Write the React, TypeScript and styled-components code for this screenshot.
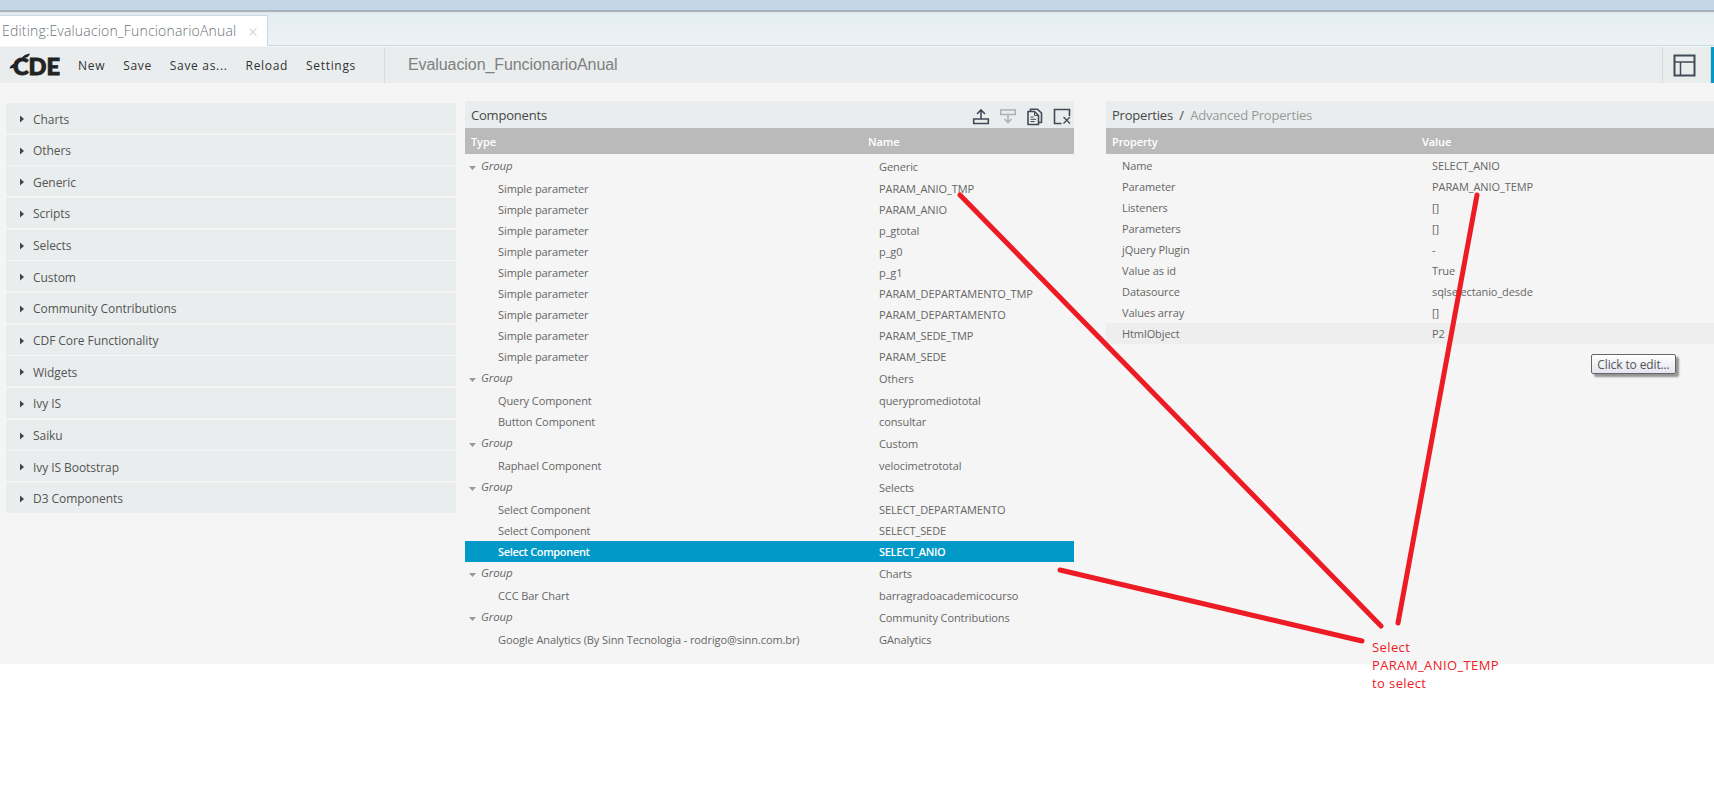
import styled, { createGlobalStyle } from 'styled-components';

const GlobalStyle = createGlobalStyle`
    body {
        margin: 0;
        background-color: #fff;
        font-family: 'Open Sans', 'Noto Sans', sans-serif;
        overflow: hidden;
    }

    * {
        box-sizing: border-box;
    }
`;

const Page = styled.div`
    position: relative;
    width: 1714px;
    height: 790px;
    overflow: hidden;
`;

const WindowBar = styled.div`
    height: 12px;
    background-color: #c4d6e5;
    border-bottom: 2px solid #a9b2ba;
`;

const TabStrip = styled.div`
    display: flex;
    align-items: flex-end;
    height: 35px;
    padding-bottom: 1px;
    background: linear-gradient(#dfe6ea 0, #e5eef1 3px, #edf2f6 33px, #c9d9e6 33px, #c9d9e6 34px, #f4f7f8 34px);
`;

const Tab = styled.div`
    display: flex;
    align-items: center;
    justify-content: space-between;
    width: 268px;
    height: 31px;
    padding: 0 10px 1px 2px;
    background-color: #fff;
    border-top: 1px solid #c9d9e6;
    border-right: 1px solid #c9d9e6;
    color: #6c7379;
    font-size: 14px;
    font-weight: 300;
    letter-spacing: 0.18px;
    white-space: nowrap;

    svg {
        margin-top: 3px;
    }
`;

const HeaderContainer = styled.header`
    display: flex;
    align-items: center;
    height: 36px;
    background-color: #e9eded;
`;

const Brand = styled.div`
    display: flex;
    width: 78px;
    padding-left: 9px;
`;

const Nav = styled.nav`
    display: flex;
    gap: 18px;
    width: 306px;
    padding-top: 1px;
    color: #333;
    font-size: 12px;
    letter-spacing: 0.68px;
    white-space: nowrap;
`;

const DashboardTitle = styled.div`
    display: flex;
    align-items: center;
    flex: 1;
    height: 36px;
    padding: 0 0 1px 23px;
    border-left: 1px solid #d8dadc;
    color: #808080;
    font-family: 'Liberation Sans', Arial, sans-serif;
    font-size: 16px;
    letter-spacing: -0.08px;
`;

const LayoutButton = styled.div`
    display: flex;
    align-items: center;
    width: 49px;
    height: 36px;
    padding-left: 10px;
    border-left: 1px solid #d6dadb;
    border-right: 1px solid #d6dadb;
`;

const ActiveMode = styled.div`
    width: 3px;
    height: 36px;
    background-color: #0099c8;
`;

const Workspace = styled.main`
    display: flex;
    align-items: flex-start;
    height: 581px;
    padding: 18px 0 0 6px;
    background-color: #f5f5f5;
`;

const Palette = styled.div`
    display: flex;
    flex-direction: column;
    gap: 1.67px;
    width: 450px;
    margin: 2px 9px 0 0;
`;

const PaletteItem = styled.div`
    display: flex;
    align-items: center;
    gap: 9px;
    height: 30px;
    padding: 2px 0 0 14px;
    background-color: #e9eded;
    color: #555;
    font-size: 12px;
    letter-spacing: -0.06px;
`;

const Panel = styled.section<{ $width: number }>`
    width: ${props => props.$width}px;
    flex: none;

    & + & {
        margin-left: 32px;
    }
`;

const PanelTitle = styled.div`
    display: flex;
    align-items: center;
    height: 27px;
    padding: 1px 3px 0 6px;
    background-color: #e9eded;
    color: #484848;
    font-size: 13px;
    letter-spacing: -0.2px;
    white-space: pre;
`;

const Muted = styled.span`
    color: #999;
`;

const Actions = styled.div`
    display: flex;
    gap: 9px;
    margin-left: auto;
    padding-top: 3px;
`;

const TableHead = styled.div<{ $split: number }>`
    display: grid;
    grid-template-columns: ${props => props.$split}px 1fr;
    align-items: center;
    height: 26px;
    margin-bottom: 1px;
    padding: 1px 0 0 6px;
    background-color: #bababa;
    color: #fff;
    font-size: 11px;
    font-weight: 600;
    letter-spacing: -0.1px;
`;

const Row = styled.div<{ $split: number; $indent: number; $selected?: boolean; $hovered?: boolean }>`
    display: grid;
    grid-template-columns: ${props => props.$split - props.$indent}px 1fr;
    align-items: center;
    height: 21px;
    padding-left: ${props => props.$indent}px;
    background-color: ${props => props.$selected ? '#0099c8' : props.$hovered ? '#eee' : 'transparent'};
    color: ${props => props.$selected ? '#fff' : '#666'};
    font-size: 11px;
    font-weight: ${props => props.$selected ? 600 : 400};
    letter-spacing: ${props => props.$selected ? -0.33 : -0.09}px;
    white-space: nowrap;
`;

const GroupRow = styled(Row)`
    height: 23px;
`;

const GroupLabel = styled.span`
    display: flex;
    align-items: center;
    gap: 5px;
    padding-bottom: 2px;
    font-size: 11.5px;
    font-style: italic;

    svg {
        margin-top: 4px;
    }
`;

const Tooltip = styled.div`
    position: absolute;
    left: 1591px;
    top: 354px;
    width: 85px;
    height: 20px;
    border: 1px solid #666;
    border-radius: 2px;
    background: linear-gradient(#fff, #e4e5f0);
    box-shadow: 3px 3px 2px rgba(0, 0, 0, 0.4);
    color: #555;
    font-size: 12px;
    letter-spacing: -0.12px;
    line-height: 19px;
    text-align: center;
    white-space: nowrap;
`;

const Annotations = styled.svg`
    position: absolute;
    left: 0;
    top: 0;
`;

const Note = styled.div`
    position: absolute;
    left: 1372px;
    top: 638px;
    color: #ed1c24;
    font-size: 13px;
    letter-spacing: 0.4px;
    line-height: 18px;
    white-space: pre;
`;

const categories = [
    'Charts', 'Others', 'Generic', 'Scripts', 'Selects', 'Custom', 'Community Contributions',
    'CDF Core Functionality', 'Widgets', 'Ivy IS', 'Saiku', 'Ivy IS Bootstrap', 'D3 Components',
];

const groups = [
    {
        name: 'Generic',
        items: [
            ['Simple parameter', 'PARAM_ANIO_TMP'],
            ['Simple parameter', 'PARAM_ANIO'],
            ['Simple parameter', 'p_gtotal'],
            ['Simple parameter', 'p_g0'],
            ['Simple parameter', 'p_g1'],
            ['Simple parameter', 'PARAM_DEPARTAMENTO_TMP'],
            ['Simple parameter', 'PARAM_DEPARTAMENTO'],
            ['Simple parameter', 'PARAM_SEDE_TMP'],
            ['Simple parameter', 'PARAM_SEDE'],
        ],
    },
    {
        name: 'Others',
        items: [
            ['Query Component', 'querypromediototal'],
            ['Button Component', 'consultar'],
        ],
    },
    { name: 'Custom', items: [['Raphael Component', 'velocimetrototal']] },
    {
        name: 'Selects',
        items: [
            ['Select Component', 'SELECT_DEPARTAMENTO'],
            ['Select Component', 'SELECT_SEDE'],
            ['Select Component', 'SELECT_ANIO'],
        ],
    },
    { name: 'Charts', items: [['CCC Bar Chart', 'barragradoacademicocurso']] },
    {
        name: 'Community Contributions',
        items: [['Google Analytics (By Sinn Tecnologia - rodrigo@sinn.com.br)', 'GAnalytics']],
    },
];

const properties = [
    ['Name', 'SELECT_ANIO'],
    ['Parameter', 'PARAM_ANIO_TEMP'],
    ['Listeners', '[]'],
    ['Parameters', '[]'],
    ['jQuery Plugin', '-'],
    ['Value as id', 'True'],
    ['Datasource', 'sqlselectanio_desde'],
    ['Values array', '[]'],
    ['HtmlObject', 'P2'],
];

const selectedName = 'SELECT_ANIO';

const Logo = () => (
    <svg width="54" height="26" viewBox="0 0 54 26" fill="#222">
        <text
            x="4"
            y="22.500"
            fontFamily="Lato, sans-serif"
            fontSize="23.500"
            fontWeight="900"
            stroke="#222"
            strokeWidth="0.900"
            textLength="47"
            lengthAdjust="spacingAndGlyphs"
        >
            CDE
        </text>
        <path d="M0.500 16.500c0.500-2.500 2.500-4 5.500-5l-1 4.500z" />
        <path d="M13 6c1.500-3 4-3.500 8-4.500-1 3.500-4 5-8 4.500z" />
    </svg>
);

const Arrow = () => (
    <svg width="4" height="8" viewBox="0 0 4 8" fill="#444">
        <path d="M0 0.500L4 4 0 7.500z" />
    </svg>
);

const Caret = () => (
    <svg width="7" height="4" viewBox="0 0 7 4" fill="#999">
        <path d="M0 0h7L3.500 4z" />
    </svg>
);

const Header = () => (
    <HeaderContainer>
        <Brand><Logo /></Brand>
        <Nav>
            <span>New</span>
            <span>Save</span>
            <span>Save as...</span>
            <span>Reload</span>
            <span>Settings</span>
        </Nav>
        <DashboardTitle>Evaluacion_FuncionarioAnual</DashboardTitle>
        <LayoutButton>
            <svg width="23" height="23" viewBox="0 0 23 23" fill="none" stroke="#414b57">
                <path d="M1.500 1.500h20v20h-20z" strokeWidth="2" />
                <path d="M2 8h19M7.500 8v13" strokeWidth="1.500" />
            </svg>
        </LayoutButton>
        <ActiveMode />
    </HeaderContainer>
);

const ToolbarIcons = () => (
    <Actions>
        <svg width="18" height="18" viewBox="0 0 18 18" fill="none" stroke="#414b57" strokeWidth="1.600">
            <path d="M9 11H1.700v4.500h14.600V11H9V2.500M5 6l4-4 4 4" />
        </svg>
        <svg width="18" height="18" viewBox="0 0 18 18" fill="none" stroke="#aeb2b5" strokeWidth="1.600">
            <path d="M9 6.500H1.700V2h14.600v4.500H9v8M5.500 11L9 14.500l3.500-3.500" />
        </svg>
        <svg width="18" height="18" viewBox="0 0 18 18" fill="none" stroke="#414b57" strokeWidth="1.600" strokeLinejoin="round">
            <path d="M2 3.500h6.500l4 4v9H2z" />
            <path d="M8.500 3.500v4h4M4.500 9h3M4.500 11.300h5.500M4.500 13.500h4" strokeWidth="1" />
            <path d="M4.500 3V1.300h7L15.500 5v9.500H13" />
        </svg>
        <svg width="18" height="18" viewBox="0 0 18 18" fill="none" stroke="#414b57" strokeWidth="1.600">
            <path d="M8.500 15.500H1.500v-14h15V8" />
            <path d="M10.500 9l6.500 6.500M17 9l-6.500 6.500" strokeWidth="1.300" />
        </svg>
    </Actions>
);

const App = () => {
    return (
        <Page>
            <GlobalStyle />
            <WindowBar />
            <TabStrip>
                <Tab>
                    <span>Editing:Evaluacion_FuncionarioAnual</span>
                    <svg width="8" height="8" viewBox="0 0 8 8" stroke="#d3dde6" strokeWidth="1.300">
                        <path d="M0.500 0.500l7 7M7.500 0.500l-7 7" />
                    </svg>
                </Tab>
            </TabStrip>
            <Header />
            <Workspace>
                <Palette>
                    {categories.map(category => (
                        <PaletteItem key={category}><Arrow />{category}</PaletteItem>
                    ))}
                </Palette>
                <Panel $width={609}>
                    <PanelTitle>
                        Components
                        <ToolbarIcons />
                    </PanelTitle>
                    <TableHead $split={397}>
                        <span>Type</span>
                        <span>Name</span>
                    </TableHead>
                    {groups.map(group => (
                        <div key={group.name}>
                            <GroupRow $split={414} $indent={4}>
                                <GroupLabel><Caret />Group</GroupLabel>
                                <span>{group.name}</span>
                            </GroupRow>
                            {group.items.map(([type, name]) => (
                                <Row key={name} $split={414} $indent={33} $selected={name === selectedName}>
                                    <span>{type}</span>
                                    <span>{name}</span>
                                </Row>
                            ))}
                        </div>
                    ))}
                </Panel>
                <Panel $width={608}>
                    <PanelTitle>
                        Properties{'  /  '}<Muted>Advanced Properties</Muted>
                    </PanelTitle>
                    <TableHead $split={310}>
                        <span>Property</span>
                        <span>Value</span>
                    </TableHead>
                    {properties.map(([name, value]) => (
                        <Row key={name} $split={326} $indent={16} $hovered={name === 'HtmlObject'}>
                            <span>{name}</span>
                            <span>{value}</span>
                        </Row>
                    ))}
                </Panel>
            </Workspace>
            <Tooltip>Click to edit...</Tooltip>
            <Annotations width="1714" height="790" fill="none" stroke="#ed1c24" strokeWidth="5" strokeLinecap="round">
                <path d="M960 195L1381 626" />
                <path d="M1477 195L1398 623" />
                <path d="M1060 570L1362 641" />
            </Annotations>
            <Note>{'Select\nPARAM_ANIO_TEMP\nto select'}</Note>
        </Page>
    );
};

export default App;
